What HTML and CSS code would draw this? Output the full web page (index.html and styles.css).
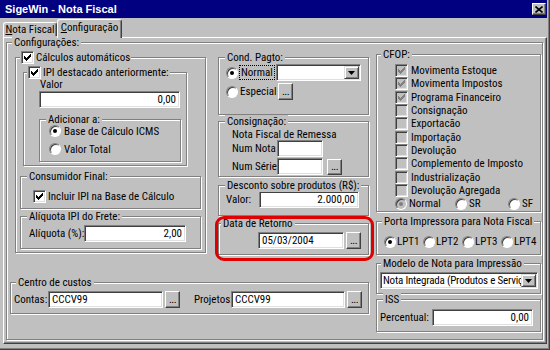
FILE: index.html
```html
<!DOCTYPE html>
<html lang="pt-BR">
<head>
    <meta charset="UTF-8">
    <meta name="viewport" content="width=device-width, initial-scale=1.0">
    <title>SigeWin - Nota Fiscal</title>
    <link rel="stylesheet" href="styles.css">
</head>
<body>
<div class="window">
    <div class="titlebar">
        <span class="title">SigeWin - Nota Fiscal</span>
        <span class="close"><svg width="8" height="7" viewBox="0 0 8 7"><path d="M0.5 0.5l7 6M7.5 0.5l-7 6" stroke="#000" stroke-width="1.6"/></svg></span>
    </div>

    <div class="tabs">
        <div class="tab"><u>N</u>ota Fiscal</div>
        <div class="tab active"><u>C</u>onfiguração</div>
    </div>

    <div class="page">
        <div class="group cfg">
            <span class="cap">Configurações:</span>
            <div class="cfg-grid">

                <!-- left column -->
                <div class="group calc">
                    <span class="cap check-cap"><span class="chk"><svg class="tick" viewBox="0 0 7 7"><path d="M0 2h1v3H0zM1 3h1v3H1zM2 4h1v3H2zM3 3h1v3H3zM4 2h1v3H4zM5 1h1v3H5zM6 0h1v3H6z"/></svg></span>Cálculos automáticos</span>

                    <div class="group ipi">
                        <span class="cap check-cap"><span class="chk"><svg class="tick" viewBox="0 0 7 7"><path d="M0 2h1v3H0zM1 3h1v3H1zM2 4h1v3H2zM3 3h1v3H3zM4 2h1v3H4zM5 1h1v3H5zM6 0h1v3H6z"/></svg></span>IPI destacado anteriormente:</span>
                        <div class="valor-lbl">Valor</div>
                        <input class="edit num valor" type="text" value="0,00">
                        <div class="group adic">
                            <span class="cap">Adicionar a:</span>
                            <div class="opt"><span class="radio on"></span>Base de Cálculo ICMS</div>
                            <div class="opt"><span class="radio"></span>Valor Total</div>
                        </div>
                    </div>

                    <div class="group consumidor">
                        <span class="cap">Consumidor Final:</span>
                        <div class="opt"><span class="chk"><svg class="tick" viewBox="0 0 7 7"><path d="M0 2h1v3H0zM1 3h1v3H1zM2 4h1v3H2zM3 3h1v3H3zM4 2h1v3H4zM5 1h1v3H5zM6 0h1v3H6z"/></svg></span>Incluir IPI na Base de Cálculo</div>
                    </div>

                    <div class="group frete">
                        <span class="cap">Alíquota IPI do Frete:</span>
                        <div class="row">
                            <span class="lbl aliq-lbl">Alíquota (%):</span>
                            <input class="edit num aliq" type="text" value="2,00">
                        </div>
                    </div>
                </div>

                <!-- middle column -->
                <div class="mid">
                    <div class="group pagto">
                        <span class="cap">Cond. Pagto:</span>
                        <div class="row">
                            <span class="radio on"></span>
                            <span class="rlabel"><span class="focus">Normal</span></span>
                            <div class="combo pagto-combo"><span class="combo-text"></span><span class="drop"><svg width="7" height="4" viewBox="0 0 7 4"><path d="M0 0h7L3.5 4z"/></svg></span></div>
                        </div>
                        <div class="row">
                            <span class="radio"></span>
                            <span class="rlabel esp">Especial</span>
                            <span class="btn">...</span>
                        </div>
                    </div>

                    <div class="group consig">
                        <span class="cap">Consignação:</span>
                        <div class="consig-title">Nota Fiscal de Remessa</div>
                        <div class="row">
                            <span class="lbl num-lbl">Num Nota</span>
                            <input class="edit small" type="text" value="">
                        </div>
                        <div class="row">
                            <span class="lbl num-lbl">Num Série</span>
                            <input class="edit small" type="text" value="">
                            <span class="btn serie-btn">...</span>
                        </div>
                    </div>

                    <div class="group desconto">
                        <span class="cap">Desconto sobre produtos (R$):</span>
                        <div class="row">
                            <span class="lbl desc-lbl">Valor:</span>
                            <input class="edit num desc" type="text" value="2.000,00">
                        </div>
                    </div>

                    <div class="group retorno">
                        <span class="cap">Data de Retorno</span>
                        <div class="row">
                            <input class="edit data" type="text" value="05/03/2004">
                            <span class="btn">...</span>
                        </div>
                        <span class="mark"></span>
                    </div>
                </div>

                <!-- right column -->
                <div class="right">
                    <div class="group cfop">
                        <span class="cap">CFOP:</span>
                        <div class="opt"><span class="chk dis"><svg class="tick" viewBox="0 0 7 7"><path d="M0 2h1v3H0zM1 3h1v3H1zM2 4h1v3H2zM3 3h1v3H3zM4 2h1v3H4zM5 1h1v3H5zM6 0h1v3H6z"/></svg></span>Movimenta Estoque</div>
                        <div class="opt"><span class="chk dis"><svg class="tick" viewBox="0 0 7 7"><path d="M0 2h1v3H0zM1 3h1v3H1zM2 4h1v3H2zM3 3h1v3H3zM4 2h1v3H4zM5 1h1v3H5zM6 0h1v3H6z"/></svg></span>Movimenta Impostos</div>
                        <div class="opt"><span class="chk dis"><svg class="tick" viewBox="0 0 7 7"><path d="M0 2h1v3H0zM1 3h1v3H1zM2 4h1v3H2zM3 3h1v3H3zM4 2h1v3H4zM5 1h1v3H5zM6 0h1v3H6z"/></svg></span>Programa Financeiro</div>
                        <div class="opt"><span class="chk dis"></span>Consignação</div>
                        <div class="opt"><span class="chk dis"></span>Exportacão</div>
                        <div class="opt"><span class="chk dis"></span>Importação</div>
                        <div class="opt"><span class="chk dis"></span>Devolução</div>
                        <div class="opt"><span class="chk dis"></span>Complemento de Imposto</div>
                        <div class="opt"><span class="chk dis"></span>Industrialização</div>
                        <div class="opt"><span class="chk dis"></span>Devolução Agregada</div>
                        <div class="radios">
                            <span class="ropt r-normal"><span class="radio dis on"></span>Normal</span>
                            <span class="ropt r-sr"><span class="radio"></span>SR</span>
                            <span class="ropt"><span class="radio"></span>SF</span>
                        </div>
                    </div>

                    <div class="group porta">
                        <span class="cap">Porta Impressora para Nota Fiscal</span>
                        <div class="radios">
                            <span class="ropt lpt"><span class="radio on"></span>LPT1</span>
                            <span class="ropt lpt"><span class="radio"></span>LPT2</span>
                            <span class="ropt lpt"><span class="radio"></span>LPT3</span>
                            <span class="ropt lpt"><span class="radio"></span>LPT4</span>
                        </div>
                    </div>

                    <div class="group modelo">
                        <span class="cap">Modelo de Nota para Impressão</span>
                        <div class="combo modelo-combo"><span class="combo-text">Nota Integrada (Produtos e Serviços)</span><span class="drop"><svg width="7" height="4" viewBox="0 0 7 4"><path d="M0 0h7L3.5 4z"/></svg></span></div>
                    </div>

                    <div class="group iss">
                        <span class="cap">ISS</span>
                        <div class="row">
                            <span class="lbl perc-lbl">Percentual:</span>
                            <input class="edit num perc" type="text" value="0,00">
                        </div>
                    </div>
                </div>

                <!-- bottom -->
                <div class="group centro">
                    <span class="cap">Centro de custos</span>
                    <div class="row">
                        <span class="lbl contas-lbl">Contas:</span>
                        <input class="edit cc" type="text" value="CCCV99">
                        <span class="btn">...</span>
                        <span class="lbl proj-lbl">Projetos:</span>
                        <input class="edit cc proj" type="text" value="CCCV99">
                        <span class="btn">...</span>
                    </div>
                </div>

            </div>
        </div>
    </div>
</div>
</body>
</html>
```

FILE: styles.css
```css
* {
    box-sizing: border-box;
}
body {
    margin: 0;
    background: #c0c0c0;
    color: #000;
    font-family: "Roboto Condensed", "Liberation Sans Narrow", "Liberation Sans", sans-serif;
    font-size: 11px;
    white-space: nowrap;
}
.window {
    width: 550px;
    height: 350px;
    background: #c0c0c0;
    border-right: 1px solid #404040;
    border-bottom: 1px solid #404040;
    box-shadow: inset -1px -1px #808080;
}

/* title bar */
.titlebar {
    width: 547px;
    height: 18px;
    background: #000080;
    color: #fff;
    display: flex;
    align-items: center;
    justify-content: space-between;
    padding: 0 1px 0 5px;
}
.title {
    font-family: "Liberation Sans", sans-serif;
    font-weight: bold;
    font-size: 11px;
}
.close {
    width: 14px;
    height: 12px;
    background: #c0c0c0;
    border: 1px solid;
    border-color: #fff #404040 #404040 #fff;
    box-shadow: inset -1px -1px #808080;
    display: flex;
    align-items: center;
    justify-content: center;
}

/* tabs */
.tabs {
    display: flex;
    align-items: flex-end;
    height: 19px;
    padding-left: 3px;
}
.tab {
    width: 54px;
    height: 15px;
    line-height: 13px;
    text-align: center;
    border: 1px solid;
    border-color: #fff #404040 transparent #fff;
    border-bottom: none;
    box-shadow: inset -1px 0 #808080;
    border-radius: 3px 3px 0 0;
}
.tab.active {
    width: 65px;
    height: 19px;
    line-height: 15px;
    margin-bottom: -1px;
    background: #c0c0c0;
    position: relative;
    z-index: 1;
}
.page {
    margin-left: 3px;
    width: 544px;
    height: 307px;
    border: 1px solid;
    border-color: #fff #404040 #404040 #fff;
    box-shadow: inset -1px -1px #808080;
    padding: 4px 0 0 2px;
}

/* etched group boxes */
.group {
    position: relative;
    border: 1px solid #808080;
    box-shadow: inset 1px 1px #fff, 1px 1px #fff;
}
.cap {
    position: absolute;
    top: -7px;
    left: 6px;
    padding: 0 2px;
    line-height: 13px;
    background: #c0c0c0;
}
.check-cap {
    display: flex;
    align-items: center;
    gap: 2px;
    padding: 0 1px;
}
.row {
    display: flex;
    align-items: center;
}
.opt {
    display: flex;
    align-items: center;
    gap: 3px;
}
.lbl {
    flex: none;
}

/* controls */
.chk {
    flex: none;
    width: 13px;
    height: 13px;
    background: #fff;
    border: 1px solid;
    border-color: #808080 #fff #fff #808080;
    box-shadow: inset 1px 1px #404040, inset -1px -1px #dfdfdf;
    display: flex;
    align-items: center;
    justify-content: center;
}
.tick {
    width: 7px;
    height: 7px;
    fill: #000;
}
.chk.dis {
    background: #c0c0c0;
}
.chk.dis .tick {
    fill: #808080;
}
.radio {
    flex: none;
    position: relative;
    width: 12px;
    height: 12px;
    border-radius: 50%;
    background: #fff;
    border: 1px solid;
    border-color: #808080 #fff #fff #808080;
    box-shadow: inset 1px 1px #404040;
}
.radio.on::after {
    content: "";
    position: absolute;
    left: 3px;
    top: 3px;
    width: 4px;
    height: 4px;
    border-radius: 50%;
    background: #000;
}
.radio.dis {
    background: #c0c0c0;
}
.radio.dis.on::after {
    background: #808080;
}
.edit {
    flex: none;
    height: 17px;
    font: inherit;
    color: #000;
    background: #fff;
    border: 1px solid;
    border-color: #808080 #fff #fff #808080;
    box-shadow: inset 1px 1px #404040, inset -1px -1px #dfdfdf;
    padding: 0 3px;
    margin: 0;
    outline: none;
}
.num {
    text-align: right;
}
.btn {
    flex: none;
    width: 15px;
    height: 17px;
    background: #c0c0c0;
    border: 1px solid;
    border-color: #fff #404040 #404040 #fff;
    box-shadow: inset -1px -1px #808080;
    display: flex;
    justify-content: center;
    align-items: flex-end;
    line-height: 10px;
    padding-bottom: 2px;
    letter-spacing: -0.5px;
}
.combo {
    flex: none;
    display: flex;
    align-items: center;
    height: 17px;
    background: #fff;
    border: 1px solid;
    border-color: #808080 #fff #fff #808080;
    box-shadow: inset 1px 1px #404040, inset -1px -1px #dfdfdf;
    padding: 1px 1px 1px 2px;
}
.combo-text {
    flex: 1;
    overflow: hidden;
    line-height: 13px;
    letter-spacing: -0.2px;
}
.drop {
    flex: none;
    width: 15px;
    height: 13px;
    background: #c0c0c0;
    border: 1px solid;
    border-color: #dfdfdf #404040 #404040 #dfdfdf;
    box-shadow: inset 1px 1px #fff, inset -1px -1px #808080;
    display: flex;
    align-items: center;
    justify-content: center;
}

/* layout */
.cfg {
    width: 537px;
    height: 298px;
}
.cfg > .cap {
    left: 5px;
}
.cfg-grid {
    display: grid;
    grid-template-columns: 203px 158px 165px;
    grid-template-rows: auto auto;
    align-items: start;
    padding: 14px 0 0 8px;
}

/* left column */
.calc {
    grid-column: 1;
    grid-row: 1;
    width: 191px;
    height: 196px;
}
.calc > .cap {
    left: 4px;
}
.ipi {
    margin: 14px 0 0 7px;
    width: 164px;
    height: 94px;
}
.ipi > .cap {
    left: 3px;
}
.valor-lbl {
    margin: 6px 0 0 16px;
    line-height: 12px;
}
.valor {
    display: block;
    margin-left: 15px;
    width: 141px;
}
.adic {
    margin: 11px 0 0 15px;
    width: 142px;
    height: 43px;
    padding: 4px 0 0 9px;
}
.adic .opt {
    height: 14px;
}
.adic .opt + .opt {
    margin-top: 4px;
}
.consumidor {
    margin: 10px 0 0 4px;
    width: 181px;
    height: 33px;
}
.consumidor .opt {
    gap: 2px;
    margin: 13px 0 0 12px;
}
.frete {
    margin: 7px 0 0 4px;
    width: 181px;
    height: 33px;
}
.frete .row {
    margin: 8px 0 0 8px;
}
.aliq-lbl {
    width: 55px;
}
.aliq {
    width: 102px;
}

/* middle column */
.mid {
    grid-column: 2;
    grid-row: 1;
    width: 151px;
    display: flex;
    flex-direction: column;
}
.pagto {
    height: 58px;
    padding: 6px 0 0 7px;
}
.pagto .row {
    height: 17px;
}
.pagto .row + .row {
    margin-top: 2px;
}
.rlabel {
    flex: none;
    width: 38px;
    padding-left: 1px;
}
.focus {
    border: 1px dotted #000;
    padding: 0 1px;
}
.rlabel.esp {
    width: 40px;
    padding-left: 2px;
}
.pagto-combo {
    width: 85px;
}
.consig {
    margin-top: 6px;
    height: 56px;
    padding: 7px 0 0 13px;
}
.consig-title {
    line-height: 11px;
}
.consig .row + .row {
    margin-top: 1px;
}
.num-lbl {
    width: 45px;
}
.small {
    width: 46px;
}
.serie-btn {
    margin-left: 4px;
    height: 16px;
}
.desconto {
    margin-top: 8px;
    height: 31px;
    padding: 5px 0 0 7px;
}
.desc-lbl {
    width: 33px;
}
.desc {
    width: 100px;
}
.retorno {
    margin-top: 7px;
    height: 32px;
    padding: 8px 0 0 39px;
}
.retorno > .cap {
    left: 2px;
}
.data {
    width: 86px;
    margin-right: 2px;
}
.mark {
    position: absolute;
    left: -4px;
    top: -8px;
    width: 159px;
    height: 45px;
    border: 3px solid #e00000;
    border-radius: 9px;
}

/* right column */
.right {
    grid-column: 3;
    grid-row: 1 / 3;
    width: 165px;
    margin-top: -3px;
    display: flex;
    flex-direction: column;
}
.cfop {
    height: 158px;
    padding: 9px 0 0 18px;
}
.cfop > .cap {
    left: 4px;
}
.cfop .opt {
    height: 13.33px;
}
.radios {
    display: flex;
    align-items: center;
    height: 13px;
}
.ropt {
    display: flex;
    align-items: center;
    gap: 2px;
}
.r-normal {
    width: 60px;
}
.r-sr {
    width: 53px;
}
.porta {
    margin-top: 9px;
    height: 34px;
    padding: 13px 0 0 7px;
}
.porta > .cap {
    left: 5px;
}
.lpt {
    width: 39px;
    gap: 1px;
}
.modelo {
    margin-top: 8px;
    height: 31px;
    padding: 8px 0 0 3px;
}
.modelo > .cap {
    left: 4px;
}
.modelo-combo {
    width: 158px;
}
.iss {
    margin-top: 5px;
    height: 33px;
    padding: 9px 0 0 3px;
}
.perc-lbl {
    width: 52px;
}
.perc {
    width: 101px;
}

/* bottom */
.centro {
    grid-column: 1 / 3;
    grid-row: 2;
    margin: 8px 0 0 -5px;
    width: 359px;
    height: 32px;
    padding: 8px 0 0 3px;
}
.centro > .cap {
    left: 5px;
}
.contas-lbl {
    width: 34px;
}
.cc {
    width: 115px;
    margin-right: 2px;
}
.cc.proj {
    width: 114px;
}
.proj-lbl {
    width: 37px;
    margin-left: 14px;
}
```
